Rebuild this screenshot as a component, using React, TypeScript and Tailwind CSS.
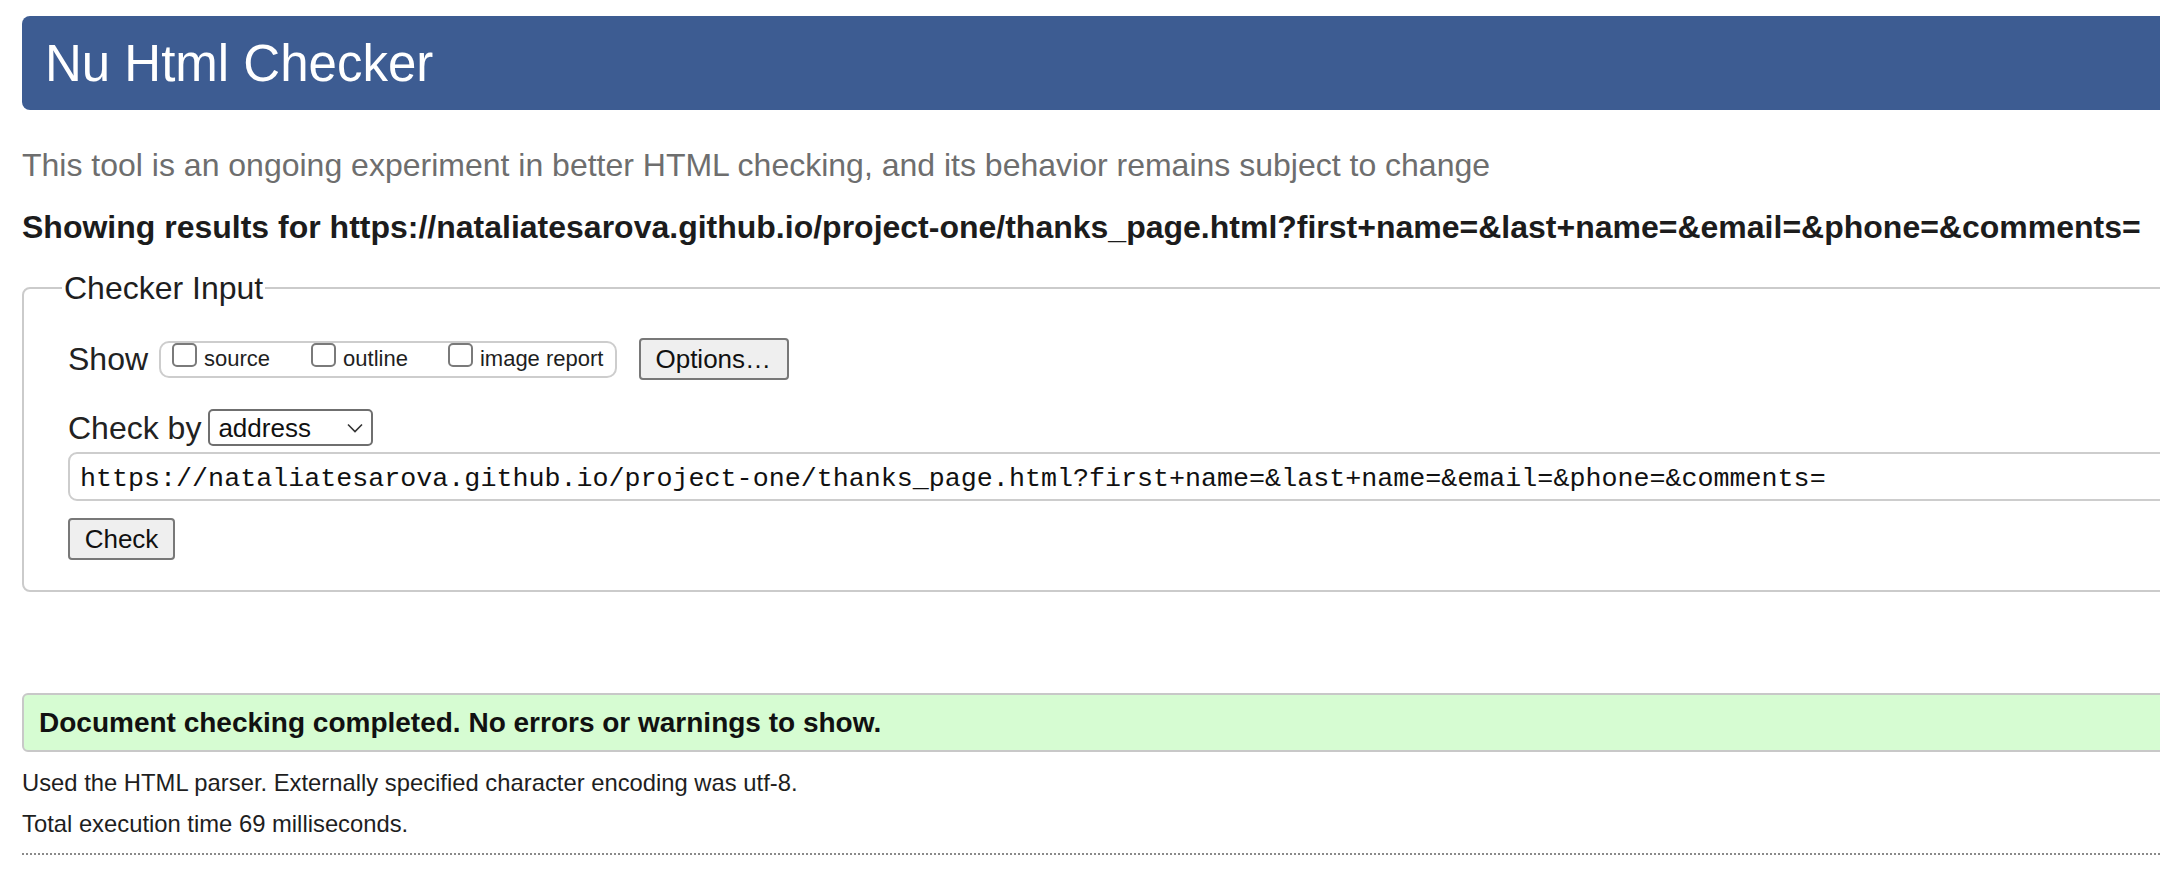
import React from "react";

const url =
  "https://nataliatesarova.github.io/project-one/thanks_page.html?first+name=&last+name=&email=&phone=&comments=";

const Box: React.FC<{ label: string; gap?: string }> = ({ label, gap }) => (
  <label className={`flex items-start ${gap ?? ""}`}>
    <span className="block w-[25px] h-[24px] rounded-[5px] border-2 border-[#7a7a7a] bg-white" />
    <span className="ml-[7px] mt-[4px] text-[22px] leading-[24px] text-[#1e1e1e]">{label}</span>
  </label>
);

const App: React.FC = () => {
  return (
    <div
      className="w-[2160px] h-[870px] overflow-hidden bg-white text-[#222]"
      style={{ fontFamily: '"Liberation Sans", Arial, Helvetica, sans-serif' }}
    >
      <div className="w-[2400px] pl-[22px]">
        {/* header */}
        <div className="mt-[16px] h-[94px] rounded-[8px] bg-[#3d5c92] flex items-center pl-[23px]">
          <h1 className="text-[51px] leading-none text-white">Nu Html Checker</h1>
        </div>

        <p className="mt-[36px] text-[32px] leading-[38px] text-[#6e6e6e]">
          This tool is an ongoing experiment in better HTML checking, and its behavior remains subject to change
        </p>
        <p className="mt-[24px] text-[32px] leading-[38px] font-bold text-[#1c1c1c]">
          Showing results for {url}
        </p>

        {/* checker input */}
        <fieldset className="mt-[23px] border-2 border-[#cbcbcb] rounded-[8px] p-0">
          <legend className="ml-[38px] px-[2px] text-[32px] leading-[38px] text-[#1e1e1e]">Checker Input</legend>
          <div className="pl-[44px] pt-[31px] pb-[30px]">
            <div className="flex items-center h-[42px]">
              <span className="text-[32px] leading-[36px]">Show</span>
              <div className="ml-[11px] h-[37px] border-2 border-[#cdcdcd] rounded-[10px] flex items-start pl-[11px] pr-[12px]">
                <Box label="source" />
                <Box label="outline" gap="ml-[41px]" />
                <Box label="image report" gap="ml-[40px]" />
              </div>
              <button className="ml-[22px] h-[42px] pl-[14px] pr-[16px] border-2 border-[#787878] rounded-[4px] bg-[#efefef] text-[26px] text-[#111]">
                Options…
              </button>
            </div>

            <div className="mt-[29px] flex items-center h-[37px]">
              <span className="text-[32px] leading-[36px]">Check by</span>
              <div className="ml-[7px] w-[165px] h-[37px] border-2 border-[#6f6f6f] rounded-[5px] flex items-center justify-between pl-[8px] pr-[8px]">
                <span className="text-[26px] leading-none text-[#111]">address</span>
                <svg width="16" height="10" viewBox="0 0 16 10" fill="none" stroke="#333" strokeWidth="1.6">
                  <path d="M1 1.5 L8 8.5 L15 1.5" />
                </svg>
              </div>
            </div>

            <div className="mt-[6px] h-[49px] border-2 border-[#cdcdcd] rounded-[9px] flex items-center pl-[10px] pt-[6px]">
              <span
                className="text-[26.7px] leading-none text-[#111] whitespace-nowrap"
                style={{ fontFamily: '"Liberation Mono", "DejaVu Sans Mono", monospace' }}
              >
                {url}
              </span>
            </div>

            <button className="mt-[17px] h-[42px] w-[107px] border-2 border-[#787878] rounded-[4px] bg-[#efefef] text-[26px] text-[#111]">
              Check
            </button>
          </div>
        </fieldset>

        {/* result */}
        <div className="mt-[101px] h-[59px] border-2 border-[#c8c8c8] rounded-[6px] bg-[#d6fcd2] flex items-center pl-[15px]">
          <span className="text-[28px] font-bold text-[#111]">
            Document checking completed. No errors or warnings to show.
          </span>
        </div>

        <p className="mt-[17px] text-[23.8px] leading-[28px] text-[#1e1e1e]">
          Used the HTML parser. Externally specified character encoding was utf-8.
        </p>
        <p className="mt-[13px] text-[23.8px] leading-[28px] text-[#1e1e1e]">Total execution time 69 milliseconds.</p>
        <div className="mt-[15px] border-t-2 border-dotted border-[#8a8a8a]" />
      </div>
    </div>
  );
};

export default App;
